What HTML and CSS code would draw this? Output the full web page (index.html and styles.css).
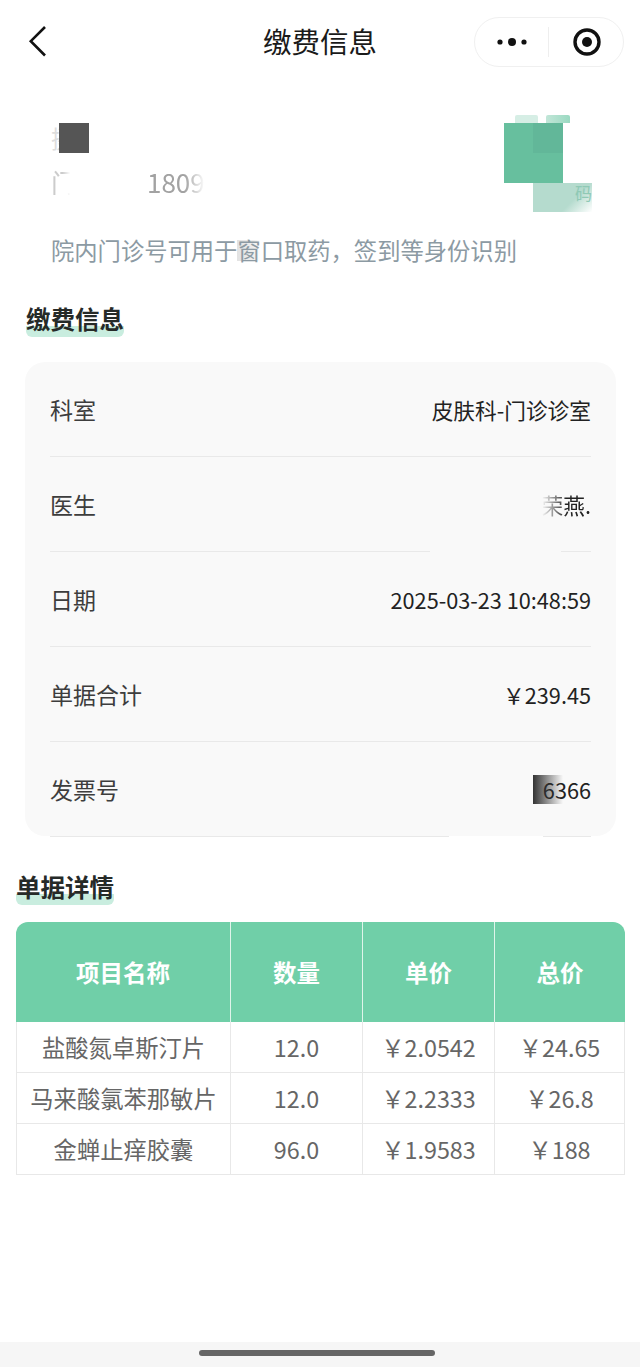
FILE: index.html
```html
<!DOCTYPE html>
<html lang="zh-CN">
<head>
<meta charset="utf-8">
<title>缴费信息</title>
<link rel="stylesheet" href="styles.css">
</head>
<body>
<div class="page">
  <header class="nav">
    <svg class="back" width="20" height="34" viewBox="0 0 20 34"><path d="M17 2 L2.8 16.2 L17 30.5" fill="none" stroke="#111" stroke-width="2.6"/></svg>
    <h1 class="nav-title">缴费信息</h1>
    <div class="capsule">
      <svg class="more" width="30" height="10" viewBox="0 0 30 10"><circle cx="3" cy="5" r="2.6" fill="#111"/><circle cx="15" cy="5" r="4" fill="#111"/><circle cx="27" cy="5" r="2.6" fill="#111"/></svg>
      <span class="capsule-line"></span>
      <svg class="target" width="30" height="30" viewBox="0 0 30 30"><circle cx="15" cy="15" r="12" fill="none" stroke="#111" stroke-width="3.4"/><circle cx="15" cy="15" r="5" fill="#111"/></svg>
    </div>
  </header>

  <main class="content">
    <section class="patient">
      <div class="patient-top">
        <div class="patient-info">
          <div class="patient-name">摄<span class="mask-dark"></span></div>
          <div class="patient-no"><span class="no-door">门</span><span class="no-digits">1809</span></div>
        </div>
        <div class="qr">
          <span class="qr-tab qr-tab-a"></span>
          <span class="qr-tab qr-tab-b"></span>
          <span class="qr-main"><span class="qr-shade"></span></span>
          <span class="qr-low">码</span>
        </div>
      </div>
      <p class="hint">院内门诊号可用于<span class="hint-blur">窗</span>口取药，签到等身份识别</p>
    </section>

    <h2 class="section-title first"><span>缴费信息</span></h2>
    <section class="card">
      <div class="row"><span class="label">科室</span><span class="value">皮肤科-门诊诊室</span></div>
      <div class="row"><span class="label">医生</span><span class="value doctor">荣燕.</span><span class="line-fade line-fade-doctor"></span></div>
      <div class="row"><span class="label">日期</span><span class="value">2025-03-23 10:48:59</span></div>
      <div class="row"><span class="label">单据合计</span><span class="value">￥239.45</span></div>
      <div class="row"><span class="label">发票号</span><span class="value invoice"><span class="mask-grad"></span>6366</span><span class="line-fade line-fade-invoice"></span></div>
    </section>

    <h2 class="section-title second"><span>单据详情</span></h2>
    <table class="detail">
      <colgroup><col class="c1"><col class="c2"><col class="c3"><col class="c4"></colgroup>
      <thead>
        <tr><th>项目名称</th><th>数量</th><th>单价</th><th>总价</th></tr>
      </thead>
      <tbody>
        <tr><td>盐酸氮卓斯汀片</td><td>12.0</td><td>￥2.0542</td><td>￥24.65</td></tr>
        <tr><td>马来酸氯苯那敏片</td><td>12.0</td><td>￥2.2333</td><td>￥26.8</td></tr>
        <tr><td>金蝉止痒胶囊</td><td>96.0</td><td>￥1.9583</td><td>￥188</td></tr>
      </tbody>
    </table>
  </main>

  <footer class="home-bar"><span class="home-handle"></span></footer>
</div>
</body>
</html>
```

FILE: styles.css
```css
* { box-sizing: border-box; }
html, body { margin: 0; padding: 0; background: #fff; }
body { font-family: "Noto Sans CJK SC", "Noto Sans", sans-serif; color: #222; }
.page { width: 640px; height: 1367px; display: flex; flex-direction: column; overflow: hidden; }

.nav { height: 82px; flex: none; position: relative; display: flex; align-items: center; justify-content: center; }
.back { position: absolute; left: 28px; top: 25px; }
.nav-title { margin: 0; font-size: 28.5px; font-weight: 400; color: #1a1a1a; line-height: 82px; }
.capsule { position: absolute; left: 474px; top: 17px; width: 150px; height: 50px; border: 1px solid #f0f0f0; border-radius: 25px; display: flex; align-items: center; }
.more { margin-left: 22px; }
.capsule-line { width: 1px; height: 30px; background: #eee; margin-left: 21px; }
.target { margin-left: 23px; }

.content { flex: 1; display: flex; flex-direction: column; }
.patient { padding: 33px 40px 0 51px; height: 205px; flex: none; }
.patient-top { display: flex; justify-content: space-between; align-items: flex-start; height: 116px; }
.patient-info { padding-top: 8px; }
.patient-name { position: relative; font-size: 24px; line-height: 30px; height: 30px; color: #ddd; width: 40px; }
.mask-dark { position: absolute; left: 8px; top: 0; width: 30px; height: 30px; background: #555; }
.patient-no { margin-top: 13px; font-size: 26px; line-height: 32px; display: flex; color: #aaa; }
.no-door { width: 96px; color: #ccc; -webkit-mask-image: linear-gradient(90deg, #000 12%, transparent 20%); mask-image: linear-gradient(90deg, #000 12%, transparent 20%); }
.no-digits { color: #a2a2a2; -webkit-mask-image: linear-gradient(90deg, #000 65%, transparent 100%); mask-image: linear-gradient(90deg, #000 65%, transparent 100%); }

.qr { position: relative; width: 96px; height: 97px; }
.qr-tab { position: absolute; top: 0; height: 8px; border-radius: 2px 2px 0 0; }
.qr-tab-a { left: 11px; width: 23px; background: #d6eee5; }
.qr-tab-b { left: 42px; width: 24px; background: linear-gradient(90deg, #c2e6d8, #9ad9c1); }
.qr-main { position: absolute; left: 0; top: 8px; width: 59px; height: 60px; background: #67bf9e; }
.qr-shade { position: absolute; right: 0; top: 0; width: 30px; height: 30px; background: #62b799; }
.qr-low { position: absolute; left: 29px; top: 68px; width: 59px; height: 29px; font-size: 17px; line-height: 20px; text-align: right; color: #8fc9b5; background: linear-gradient(135deg, #b5dbce 65%, #fff 100%); }

.hint { margin: 2px 0 0; font-size: 23.3px; line-height: 34px; color: #8c9aa3; white-space: nowrap; }
.hint-blur { background: linear-gradient(90deg, #e2e2e2, #eee 70%, transparent) center / 100% 21px no-repeat; }

.section-title { margin: 0; flex: none; font-size: 24.5px; line-height: 34px; font-weight: 700; color: #262a28; }
.section-title span { display: inline-block; position: relative; z-index: 0; }
.section-title span::after { content: ""; position: absolute; z-index: -1; left: 0; right: 0; bottom: -1px; height: 11px; border-radius: 0 0 6px 6px; background: #c9eddf; }
.section-title.first { margin: 15px 0 0 26px; }
.section-title.second { margin: 34px 0 0 16px; }

.card { flex: none; margin: 26px 24px 0 25px; padding: 0 25px; height: 474px; background: #f9f9f9; border-radius: 20px; }
.row { height: 95px; display: flex; align-items: center; justify-content: space-between; border-bottom: 1px solid #e9e9e9; font-size: 23px; position: relative; }
.label { color: #3d3d3d; }
.value { color: #222; position: relative; font-size: 21.7px; }
.doctor { -webkit-mask-image: linear-gradient(90deg, transparent 0%, #000 50%); mask-image: linear-gradient(90deg, transparent 0%, #000 50%); }
.line-fade { position: absolute; bottom: -1px; height: 1px; background: #f9f9f9; }
.line-fade-doctor { left: 380px; right: 30px; }
.line-fade-invoice { left: 399px; right: 48px; background: #fff; }
.mask-grad { position: absolute; left: -10px; top: 1px; width: 30px; height: 29px; background: linear-gradient(90deg, #333, transparent); }

.detail { flex: none; margin: 18px 0 0 16px; width: 609px; table-layout: fixed; border-collapse: separate; border-spacing: 0; font-size: 23.3px; text-align: center; }
.c1 { width: 214px; }
.c2 { width: 132px; }
.c3 { width: 132px; }
.c4 { width: 131px; }
.detail th { height: 100px; padding: 0; background: #70cfa8; color: #fff; font-weight: 700; font-size: 23.5px; border-left: 1px solid #dff4ea; }
.detail th:first-child { border-left: 0; border-top-left-radius: 12px; }
.detail th:last-child { border-top-right-radius: 12px; }
.detail td { height: 51px; padding: 0; color: #666; border-left: 1px solid #e8e8e8; border-bottom: 1px solid #e8e8e8; white-space: nowrap; }
.detail td:last-child { border-right: 1px solid #e8e8e8; }

.home-bar { flex: none; margin-top: auto; height: 25px; background: #f6f6f6; padding: 8px 0 0 199px; }
.home-handle { display: block; width: 236px; height: 6px; border-radius: 3px; background: #666; }
```
